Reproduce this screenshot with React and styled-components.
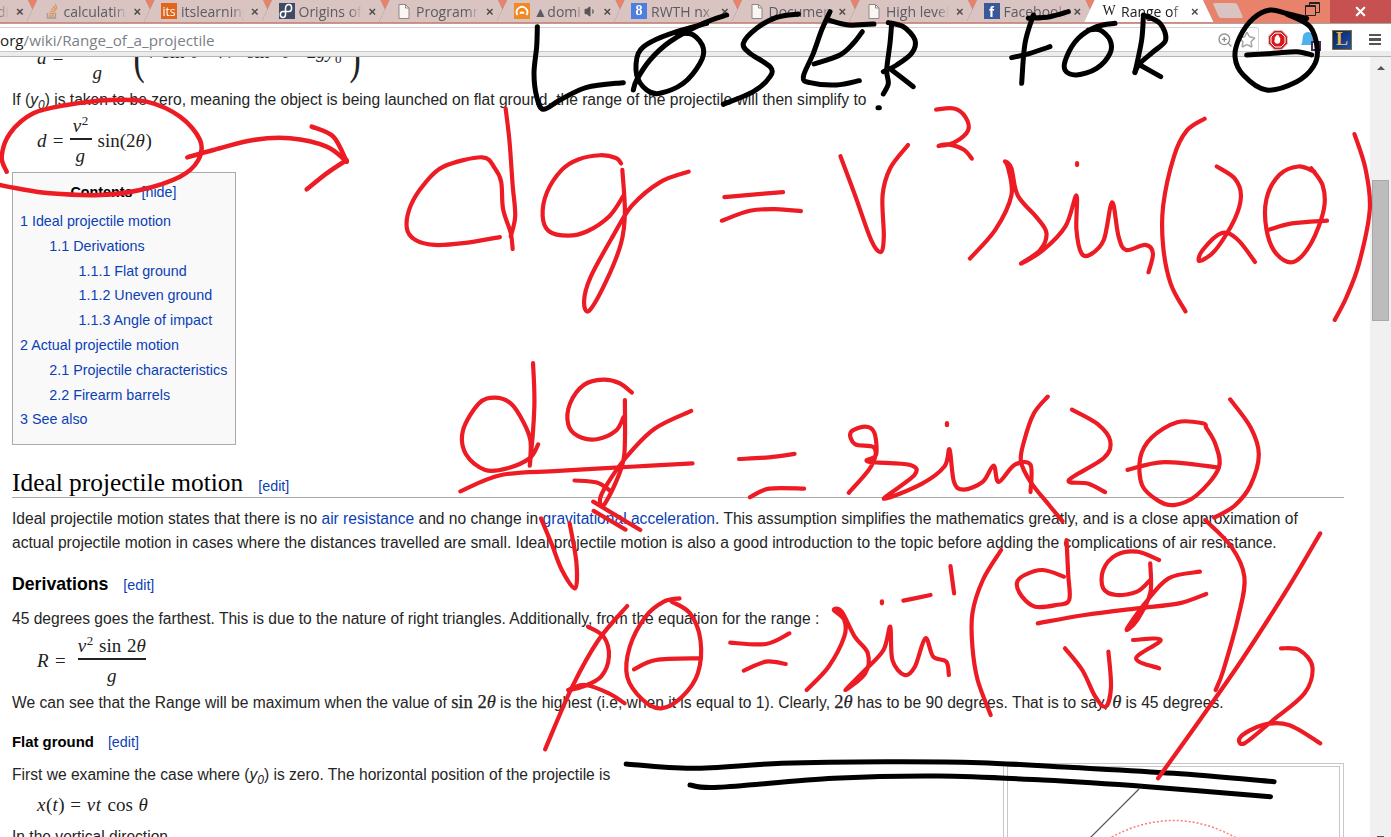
import React from "react";
import styled, { createGlobalStyle } from "styled-components";
import { X, ZoomIn, Star, Volume1 } from "lucide-react";

const GlobalStyle = createGlobalStyle`
  html, body {
    margin: 0;
    padding: 0;
    height: 100%;
    overflow: hidden;
    background: #fff;
  }
  * { box-sizing: border-box; }
`;

/* ---------- browser chrome ---------- */

const Page = styled.div`
  position: relative;
  width: 1391px;
  height: 837px;
  overflow: hidden;
  display: flex;
  flex-direction: column;
  font-family: "Liberation Sans", Arial, sans-serif;
`;

const TabStrip = styled.div`
  height: 23px;
  flex: none;
  display: flex;
  align-items: flex-start;
  background: #e9826b;
  overflow: hidden;
`;

const Tabs = styled.div`
  display: flex;
  margin-left: -91px;
  height: 22px;
`;

const TabShell = styled.div`
  width: 129.5px;
  height: 22px;
  flex: none;
  margin-right: -12px;
  position: relative;
  z-index: ${(p) => (p.$active ? 5 : 1)};
  filter: drop-shadow(0 0 0.6px #7d6a66);
`;

const TabBody = styled.div`
  height: 100%;
  display: flex;
  align-items: center;
  padding: 0 15px 0 17px;
  background: ${(p) => (p.$active ? "#fff" : "#d9c4c2")};
  clip-path: polygon(10.5px 0, calc(100% - 10.5px) 0, 100% 100%, 0 100%);
  color: ${(p) => (p.$active ? "#222" : "#5b5b63")};
`;

const TabLabel = styled.span`
  width: ${(p) => (p.$short ? "50px" : "63px")};
  margin-left: 4px;
  overflow: hidden;
  white-space: nowrap;
  text-align: ${(p) => (p.$end ? "right" : "left")};
  font: 14px "Open Sans", sans-serif;
  -webkit-mask-image: linear-gradient(to right, #000 80%, transparent);
  mask-image: linear-gradient(to right, #000 80%, transparent);
`;

const TabClose = styled.span`
  margin-left: auto;
  font: bold 13px "Liberation Sans", sans-serif;
  color: #4c4c4c;
  display: flex;
  align-items: center;
`;

const Favicon = styled.span`
  width: 16px;
  height: 16px;
  flex: none;
  display: flex;
  align-items: center;
  justify-content: center;
  overflow: hidden;
  background: ${(p) => p.$bg || "transparent"};
  color: ${(p) => p.$color || "#fff"};
  font: ${(p) => p.$font || "bold 10px 'Liberation Sans', sans-serif"};
`;

const NewTab = styled.div`
  width: 24px;
  height: 15px;
  margin: 3px 0 0 14px;
  flex: none;
  border-radius: 2px;
  background: #d9c4c2;
  transform: skewX(24deg);
`;

const WindowControls = styled.div`
  position: absolute;
  top: 0;
  right: 0;
  height: 23px;
  display: flex;
  align-items: flex-start;
`;

const RestoreIcon = styled.svg`
  margin-top: 1px;
`;

const CloseWindow = styled.div`
  width: 61px;
  height: 23px;
  margin-left: 10px;
  background: #c75050;
  display: flex;
  align-items: center;
  justify-content: center;
  color: #fff;
`;

const Toolbar = styled.div`
  height: 34px;
  flex: none;
  display: flex;
  align-items: flex-start;
  background: #fff;
  border-top: 1px solid #a9a3a3;
  border-bottom: 1px solid #b4b4b4;
  padding-top: 3px;
  position: relative;
`;

const Omnibox = styled.div`
  position: relative;
  z-index: 1;
  width: 1259px;
  height: 25px;
  flex: none;
  display: flex;
  align-items: center;
  justify-content: space-between;
  background: #fff;
  border-top: 1px solid #d5d5d5;
  border-right: 1px solid #d5d5d5;
  border-bottom: 1px solid #c9c9c9;
  border-top-right-radius: 3px;
  border-bottom-right-radius: 3px;
  padding-right: 2px;
  font: 15.2px "Open Sans", sans-serif;
  color: #7b7f86;
`;

const Host = styled.span`
  color: #222;
`;

const OmniIcons = styled.div`
  display: flex;
  align-items: center;
  gap: 5px;
  color: #8f8f8f;
`;

const ToolIcons = styled.div`
  position: relative;
  z-index: 1;
  flex: 1;
  display: flex;
  align-items: center;
  height: 25px;
  padding-left: 9px;
  gap: 11px;
`;

const Hamburger = styled.div`
  width: 12px;
  margin-left: 6px;
  display: flex;
  flex-direction: column;
  gap: 2px;
  span {
    height: 2.5px;
    background: #555;
  }
`;

const ToolBand = styled.div`
  position: absolute;
  left: 0;
  right: 0;
  bottom: 0;
  height: 5px;
  background: #ececec;
`;

const LolBadge = styled.div`
  width: 20px;
  height: 20px;
  flex: none;
  border: 1.5px solid #8a6c2c;
  background: linear-gradient(135deg, #0a1f55, #1a55b4);
  color: #e2b64c;
  font: bold 18px/17px "Liberation Serif", serif;
  text-align: center;
`;

/* ---------- wiki article ---------- */

const Viewport = styled.div`
  flex: 1;
  display: flex;
  min-height: 0;
`;

const Article = styled.main`
  width: 1370px;
  flex: none;
  overflow: hidden;
  padding: 0 26px 0 12px;
  font-size: 15.6px;
  line-height: 24px;
  color: #252525;
`;

const Para = styled.p`
  margin: ${(p) => p.$top || 0}px 0 0;
`;

const Link = styled.a`
  color: #0b3fb5;
`;

const EditLink = styled.span`
  font: 400 14.3px "Liberation Sans", sans-serif;
  color: #0b3fb5;
  margin-left: ${(p) => p.$gap || 15}px;
`;

const Var = styled.i`
  font-family: "Liberation Sans", sans-serif;
  font-style: italic;
  sub { font-size: 12px; line-height: 0; }
`;

const Formula = styled.div`
  display: flex;
  align-items: center;
  height: ${(p) => p.$h}px;
  margin: ${(p) => p.$top || 0}px 0 0 25px;
  gap: ${(p) => p.$gap || 6}px;
  font: 19px/1 "Liberation Serif", serif;
  color: #222;
  white-space: nowrap;
  word-spacing: 1px;
  i { letter-spacing: 0.6px; }
  sup { font-size: 13px; line-height: 0; }
  sub { font-size: 13px; line-height: 0; }
`;

const CutOff = styled.div`
  height: 31px;
  overflow: hidden;
`;

const Frac = styled.span`
  display: inline-flex;
  flex-direction: column;
  align-items: center;
  min-width: ${(p) => p.$w || 20}px;
`;

const Num = styled.span`
  height: 24px;
  display: flex;
  align-items: flex-end;
  padding-bottom: 3px;
  white-space: pre;
  align-self: stretch;
  justify-content: center;
  border-bottom: 2px solid #222;
`;

const Den = styled.span`
  height: 24px;
  padding-top: 6px;
`;

const BigParen = styled.span`
  font: 300 48px/60px "Liberation Serif", serif;
  transform: scaleX(0.7);
  width: 10px;
  display: inline-block;
  text-align: center;
`;

const RadicalRow = styled.span`
  width: 194px;
  padding-bottom: 12px;
  display: flex;
  justify-content: space-between;
`;

const InlineMath = styled.span`
  font: 18.500px "Liberation Serif", serif;
  -webkit-text-stroke: 0.25px #222;
`;

const Toc = styled.nav`
  width: 224px;
  height: 273px;
  margin-top: 7px;
  padding: 7px 0 0 7px;
  background: #f9f9f9;
  border: 1px solid #aaa;
  font-size: 14.3px;
`;

const TocTitle = styled.div`
  text-align: center;
  padding-right: 8px;
  font-weight: 700;
  color: #000;
  margin-bottom: 5px;
  span {
    font-weight: 400;
    color: #0b3fb5;
    margin-left: 9px;
  }
`;

const TocList = styled.ul`
  margin: 0;
  padding: 0;
  list-style: none;
`;

const TocItem = styled.li`
  line-height: 24.8px;
  color: #0b3fb5;
  white-space: nowrap;
  padding-left: ${(p) => p.$level * 29.3}px;
`;

const H2 = styled.h2`
  margin: 21px 0 9px;
  height: 32px;
  font: 400 25.4px/32px "Liberation Serif", serif;
  color: #000;
  border-bottom: 1px solid #aaa;
`;

const H3 = styled.h3`
  margin: 16px 0 10px;
  font: 700 17.7px/26px "Liberation Sans", sans-serif;
  color: #000;
`;

const H4 = styled.h4`
  margin: 15px 0 9px;
  font: 700 14.9px/24px "Liberation Sans", sans-serif;
  color: #000;
`;

const Thumb = styled.figure`
  float: right;
  width: 341px;
  height: 200px;
  margin: 0 0 0 20px;
  padding: 2px 3px;
  border: 1px solid #c8c8c8;
`;

const ThumbInner = styled.div`
  height: 100%;
  border: 1px solid #c8c8c8;
`;

const Scrollbar = styled.aside`
  flex: 1;
  display: flex;
  flex-direction: column;
  align-items: center;
  background: #f0f0f0;
`;

const ArrowUp = styled.div`
  margin-top: 9px;
  width: 0;
  height: 0;
  border-left: 4px solid transparent;
  border-right: 4px solid transparent;
  border-bottom: 4px solid #555;
`;

const ScrollThumb = styled.div`
  width: 17px;
  height: 141px;
  margin-top: 110px;
  background: #bcbcbc;
  border: 1px solid #a8a8a8;
`;

const ArrowDown = styled.div`
  margin-top: auto;
  width: 7px;
  height: 1px;
  background: #555;
`;

/* ---------- hand drawn marker layer ---------- */

const InkLayer = styled.svg`
  position: absolute;
  left: 0;
  top: 0;
  pointer-events: none;
  z-index: 10;
`;

// each group holds points read off a zoomed crop: origin + scale of that crop
const INK = [
  {
    color: "#000", width: 5, ox: 520, oy: 10, sx: 3, sy: 3,
    strokes: [
      [[52,50],[50,110],[42,190],[50,260],[70,298],[120,270],[200,232],[310,218]],
      [[620,15],[550,40],[450,95],[390,150],[350,210],[340,240]],
      [[470,70],[520,75],[550,115],[540,160],[490,220],[420,250],[380,240],[350,195],[355,130],[395,95],[470,65],[560,40]],
      [[835,12],[770,22],[710,55],[670,100],[690,130],[750,170],[750,200],[700,245],[610,283]],
      [[930,5],[905,60],[880,130],[850,200],[870,218],[950,225],[1018,212]],
      [[925,30],[985,45],[1062,42]],
      [[882,162],[960,135],[1000,100],[1027,65]],
      [[1115,40],[1110,100],[1100,180],[1105,220],[1090,252]],
      [[1105,38],[1150,50],[1185,90],[1175,130],[1130,165],[1090,185]],
      [[1115,180],[1180,230]],
      [[1074,293],[1078,293]],
    ],
  },
  {
    color: "#000", width: 5, ox: 1000, oy: 10, sx: 3, sy: 3,
    strokes: [
      [[100,15],[75,100],[65,220]],
      [[85,25],[150,20],[205,5]],
      [[35,143],[90,130],[150,110]],
      [[345,40],[290,50],[235,85],[200,140],[195,180],[230,195],[290,175],[330,130],[330,90],[300,60],[265,60]],
      [[430,20],[425,90],[405,188]],
      [[430,15],[480,40],[497,90],[460,125],[420,160],[405,185]],
      [[420,165],[482,200]],
    ],
  },
  {
    color: "#000", width: 5, ox: 1200, oy: 0, sx: 3, sy: 3,
    strokes: [
      [[320,55],[260,40],[210,30],[160,55],[120,110],[105,170],[130,225],[200,270],[290,245],[340,200],[352,150],[330,80],[260,42]],
      [[140,165],[220,160],[290,155],[335,165]],
    ],
  },
  {
    color: "#000", width: 5, ox: 520, oy: 480, sx: 1.912, sy: 3,
    strokes: [
      [[203,852],[330,865],[500,850],[700,845],[880,848],[1050,862],[1250,880],[1442,905]],
      [[325,915],[380,922],[600,895],[800,888],[1000,900],[1200,920],[1435,950]],
    ],
  },
  {
    color: "#ed1c24", width: 4.5, ox: 0, oy: 50, sx: 3, sy: 3,
    strokes: [
      [[20,365],[5,320],[30,250],[100,190],[200,165],[330,150],[440,155],[540,200],[600,270],[595,330],[540,380],[420,420],[300,435],[150,430],[50,415],[0,405]],
      [[562,322],[640,300],[760,270],[870,265],[980,290],[1040,335]],
      [[935,230],[1000,260],[1040,335]],
      [[920,418],[980,370],[1040,330]],
    ],
  },
  {
    color: "#ed1c24", width: 4.2, ox: 380, oy: 100, sx: 1.568, sy: 2.933,
    strokes: [
      // dg = v^2 sin(2 theta)
      [[188,402],[130,420],[85,425],[55,410],[42,375],[48,310],[70,245],[100,195],[160,168],[180,200],[190,240],[193,320],[205,390],[208,437]],
      [[197,25],[203,120],[208,250],[212,340],[205,400]],
      [[378,186],[370,170],[345,162],[310,175],[285,205],[262,270],[255,340],[265,385],[295,398],[325,385],[360,340],[382,280]],
      [[380,205],[384,330],[378,420],[355,530],[328,618],[320,590],[330,520],[365,400],[395,310],[440,240],[484,210]],
      [[540,285],[580,278],[632,270]],
      [[536,354],[580,325],[620,320],[660,326]],
      [[722,165],[745,280],[770,410],[785,446],[790,400],[788,280],[800,200],[828,132]],
      [[872,28],[900,25],[918,50],[922,90],[900,125],[876,135],[890,130],[915,145],[928,172]],
      [[925,465],[965,380],[990,280],[985,200],[980,180],[990,200],[1000,280],[1030,345],[1045,390],[1035,440],[1005,480],[1040,440],[1075,370],[1092,280],[1092,380],[1100,450],[1115,452],[1135,410],[1148,300],[1158,400],[1170,440],[1200,425],[1212,450],[1205,505]],
      [[1093,185],[1093,191]],
      [[1293,55],[1265,90],[1245,165],[1228,310],[1228,430],[1240,540],[1263,620]],
      [[1312,195],[1340,230],[1350,280],[1340,350],[1310,440],[1285,472],[1290,440],[1320,390],[1345,410],[1372,475]],
      [[1465,210],[1440,195],[1410,220],[1390,290],[1390,380],[1405,450],[1432,475],[1460,420],[1480,320],[1478,250],[1460,200]],
      [[1395,380],[1430,362],[1485,354]],
      [[1528,100],[1545,200],[1552,320],[1535,480],[1515,580],[1497,645]],
      // dg/v^2 = sin(2 theta)
      [[240,772],[242,900],[235,1070],[236,1000],[225,945],[205,890],[180,873],[155,890],[130,970],[135,1040],[165,1085],[200,1080],[235,1050],[248,1010]],
      [[395,858],[375,830],[350,820],[320,835],[298,890],[295,950],[310,985],[340,995],[370,970],[382,930]],
      [[384,880],[383,1040],[370,1120],[350,1190],[345,1170],[355,1130],[385,1050],[430,965],[488,912]],
      [[126,1148],[190,1100],[280,1088],[400,1075],[490,1066]],
      [[305,1116],[340,1122],[360,1145]],
      [[335,1205],[385,1260]],
      [[563,1053],[610,1048],[650,1038]],
      [[580,1165],[610,1140],[665,1140]],
      [[735,1152],[770,1075],[775,1020],[745,1010],[738,975],[760,958],[775,975],[778,1040],[765,1060],[830,1070],[838,1100],[790,1170],[850,1125],[885,1075],[893,1025],[900,1120],[915,1143],[945,1120],[962,1072],[970,1120],[995,1070],[1020,1070],[1020,1150]],
      [[889,948],[889,954]],
      [[1047,870],[1025,920],[1010,1000],[1005,1060],[1020,1120],[1050,1190],[1070,1235]],
      [[1085,908],[1125,950],[1145,1000],[1135,1050],[1080,1115],[1110,1125],[1137,1150]],
      [[1295,960],[1290,948],[1250,945],[1210,990],[1192,1050],[1195,1130],[1220,1175],[1245,1188],[1280,1160],[1315,1080],[1310,1010],[1295,960]],
      [[1172,1085],[1230,1062],[1315,1078]],
      [[1333,878],[1365,960],[1378,1040],[1365,1130],[1340,1190],[1308,1225]],
    ],
  },
  {
    color: "#ed1c24", width: 4.2, ox: 520, oy: 480, sx: 1.912, sy: 3,
    strokes: [
      [[140,65],[230,150]],
      [[40,115],[60,190],[80,270],[105,325],[108,250],[95,130]],
      [[205,378],[150,480],[100,620],[48,808]],
      [[130,440],[160,470],[170,530],[155,590],[120,620],[92,630],[125,615],[170,640],[200,670]],
      [[305,355],[275,365],[240,410],[210,500],[205,590],[235,660],[270,685],[310,650],[340,580],[345,480],[325,400],[290,365]],
      [[218,568],[260,540],[345,535]],
      [[402,488],[470,492],[515,460]],
      [[428,572],[470,545],[508,552]],
      [[548,630],[590,560],[620,470],[620,420],[600,390],[615,395],[640,470],[665,520],[660,580],[622,630],[660,570],[695,510],[708,440],[712,540],[735,585],[755,560],[775,475],[790,530],[815,545],[820,585]],
      [[692,364],[692,370]],
      [[733,362],[785,345]],
      [[823,258],[830,340]],
      [[920,210],[885,300],[865,400],[865,500],[875,600],[900,705]],
      [[1045,180],[1048,280],[1050,360],[1025,375],[985,380],[960,350],[950,310],[965,285],[1000,270],[1040,290]],
      [[1222,240],[1180,215],[1140,225],[1115,270],[1115,325],[1140,345],[1180,335],[1205,300]],
      [[1205,250],[1205,340],[1180,420],[1160,448],[1195,370],[1240,295],[1300,275]],
      [[990,430],[1080,405],[1180,385],[1260,370],[1312,342]],
      [[1042,505],[1075,570],[1100,650],[1120,680],[1130,620],[1125,515]],
      [[1172,480],[1225,480],[1178,535],[1222,565]],
      [[1310,120],[1360,200],[1385,290],[1375,400],[1345,570],[1330,630]],
      [[1530,160],[1470,320],[1380,540],[1300,720],[1220,895]],
      [[1455,505],[1490,510],[1515,560],[1500,640],[1440,720],[1385,790],[1378,770],[1420,735],[1470,735],[1530,790]],
    ],
  },
];

// catmull-rom through the points so the marker line hits every reading
const smooth = (pts) => {
  let d = `M${pts[0][0]} ${pts[0][1]}`;
  for (let i = 0; i < pts.length - 1; i++) {
    const p0 = pts[i - 1] || pts[i];
    const p1 = pts[i];
    const p2 = pts[i + 1];
    const p3 = pts[i + 2] || p2;
    const c1 = [p1[0] + (p2[0] - p0[0]) / 6, p1[1] + (p2[1] - p0[1]) / 6];
    const c2 = [p2[0] - (p3[0] - p1[0]) / 6, p2[1] - (p3[1] - p1[1]) / 6];
    d += ` C${c1[0]} ${c1[1]} ${c2[0]} ${c2[1]} ${p2[0]} ${p2[1]}`;
  }
  return d;
};

const Ink = () => (
  <InkLayer width="1391" height="837" viewBox="0 0 1391 837" fill="none" strokeLinecap="round" strokeLinejoin="round">
    {INK.map((g, i) =>
      g.strokes.map((s, j) => (
        <path
          key={`${i}-${j}`}
          d={smooth(s.map(([x, y]) => [g.ox + x / g.sx, g.oy + y / g.sy]))}
          stroke={g.color}
          strokeWidth={g.width}
        />
      ))
    )}
  </InkLayer>
);

/* ---------- small drawn icons ---------- */

const PageIcon = () => (
  <Favicon>
    <svg width="12" height="15" viewBox="0 0 12 15" fill="#fbf6f4" stroke="#8e8785">
      <path d="M1 .5h6.500l3.500 3.500v10.500H1z" />
      <path d="M7.500.5v3.500h3.500" fill="none" />
    </svg>
  </Favicon>
);

const StackIcon = () => (
  <Favicon>
    <svg width="14" height="16" viewBox="0 0 14 16" fill="none" stroke="#d9985a" strokeWidth="1.3">
      <path d="M2.500 10v5h8v-5" stroke="#a89c92" />
      <path d="M4 13h5M4.200 10.500l5 .5M5 8l4.800 1.500M6.300 5.500l4.200 2.700M8 3.300l3.400 3.700M10.300 1l1.600 4.800" />
    </svg>
  </Favicon>
);

const OriginsIcon = () => (
  <svg width="16" height="16" viewBox="0 0 16 16" fill="none" stroke="#fff" strokeWidth="1.500">
    <path d="M4 14.500c-3.500 0-3.500-6 0-6h6c3.500 0 3.500-7 0-7s-3.500 3-3.500 4.500v5.500c0 1.500-1 3-2.500 3z" />
  </svg>
);

const OrangeIcon = () => (
  <svg width="14" height="14" viewBox="0 0 14 14" fill="none" stroke="#fff" strokeWidth="1.800">
    <path d="M2.500 11a5.300 5.300 0 1 1 9 0" />
    <path d="M5 9.500a2.500 2.500 0 0 1 4 0" />
  </svg>
);

const StopIcon = () => (
  <svg width="20" height="20" viewBox="0 0 20 20">
    <path d="M6 0h8l6 6v8l-6 6H6l-6-6V6z" fill="#c8c8c8" />
    <path d="M6.400 1h7.200L19 6.400v7.200L13.600 19H6.400L1 13.600V6.400z" fill="#d9161c" />
    <path d="M7 3h6l4 4v6l-4 4H7l-4-4V7z" fill="none" stroke="#fff" strokeWidth="1" />
    <path d="M6.800 9V7.200c0-.8 1.100-.8 1.100 0V5.800c0-.8 1.100-.8 1.100 0v-.5c0-.8 1.100-.8 1.100 0v.6c0-.8 1.100-.8 1.100 0v1.900c0-.7 1-.7 1 0v3c0 2-1.200 3-2.800 3-1.900 0-2.600-1-3.100-2.800z" fill="#fff" />
  </svg>
);

const BellIcon = () => (
  <svg width="22" height="22" viewBox="0 0 22 22">
    <path d="M2 16c2-2 1-7 2.500-10.500C6 2 12 2 13.500 5.500 15 9 14 14 16 16z" fill="#4db2ea" />
    <rect x="13" y="13" width="8" height="8" fill="#fff" stroke="#4b2a5e" strokeWidth="2" />
  </svg>
);

const TABS = [
  { label: "di", end: true },
  { label: "calculating", icon: <StackIcon /> },
  { label: "itslearning", icon: <Favicon $bg="#e2651c" $font="400 12px 'Open Sans', sans-serif">its</Favicon> },
  { label: "Origins of", icon: <Favicon $bg="#3f4a66"><OriginsIcon /></Favicon> },
  { label: "Programming", icon: <PageIcon /> },
  { label: "▲domi", short: true, speaker: true, icon: <Favicon $bg="#f28a24"><OrangeIcon /></Favicon> },
  { label: "RWTH nx", icon: <Favicon $bg="#4d7fe0" $font="bold 14px 'Liberation Serif', serif">8</Favicon> },
  { label: "Document", icon: <PageIcon /> },
  { label: "High level", icon: <PageIcon /> },
  { label: "Facebook", icon: <Favicon $bg="#3b5998" $font="bold 15px 'Liberation Sans', sans-serif">f</Favicon> },
  { label: "Range of", active: true, icon: <Favicon $color="#222" $font="400 14px 'Liberation Serif', serif">W</Favicon> },
];

const TOC = [
  { n: "1 Ideal projectile motion", level: 0 },
  { n: "1.1 Derivations", level: 1 },
  { n: "1.1.1 Flat ground", level: 2 },
  { n: "1.1.2 Uneven ground", level: 2 },
  { n: "1.1.3 Angle of impact", level: 2 },
  { n: "2 Actual projectile motion", level: 0 },
  { n: "2.1 Projectile characteristics", level: 1 },
  { n: "2.2 Firearm barrels", level: 1 },
  { n: "3 See also", level: 0 },
];

const App = () => (
  <Page>
    <GlobalStyle />
    <TabStrip>
      <Tabs>
        {TABS.map((t) => (
          <TabShell key={t.label} $active={t.active}>
            <TabBody $active={t.active}>
              {t.icon || <Favicon />}
              <TabLabel $short={t.short} $end={t.end}>{t.label}</TabLabel>
              {t.speaker && <Volume1 size={13} color="#555" fill="#555" />}
              <TabClose>×</TabClose>
            </TabBody>
          </TabShell>
        ))}
      </Tabs>
      <NewTab />
    </TabStrip>
    <WindowControls>
      <RestoreIcon width="15" height="15" viewBox="0 0 15 15" fill="none" stroke="#222" strokeWidth="1">
        <path d="M.5 4.500h10v10H.5z" />
        <path d="M4.500 4.500v-3h10v10h-4" />
        <path d="M4.500 2.500h10M.5 5.500h10" />
      </RestoreIcon>
      <CloseWindow><X size={15} strokeWidth={3.4} /></CloseWindow>
    </WindowControls>

    <Toolbar>
      <ToolBand />
      <Omnibox>
        <span><Host>org</Host>/wiki/Range_of_a_projectile</span>
        <OmniIcons>
          <ZoomIn size={16} />
          <Star size={18} color="#a5a5a5" />
        </OmniIcons>
      </Omnibox>
      <ToolIcons>
        <StopIcon />
        <BellIcon />
        <LolBadge>L</LolBadge>
        <Hamburger><span /><span /><span /></Hamburger>
      </ToolIcons>
    </Toolbar>

    <Viewport>
      <Article>
        <CutOff>
          <Formula $h={60} $top={-30}>
            <span><i>d</i> =</span>
            <Frac $w={56}><Num> </Num><Den><i>g</i></Den></Frac>
            <BigParen>(</BigParen>
            <RadicalRow>
              <span><i>v</i> sin <i>θ</i></span>
              <span>+</span>
              <span>√<i>v</i><sup>2</sup> sin<sup>2</sup> <i>θ</i></span>
              <span>+</span>
              <span>2<i>gy</i><sub>0</sub></span>
            </RadicalRow>
            <BigParen>)</BigParen>
          </Formula>
        </CutOff>

        <Para>If (<Var>y<sub>0</sub></Var>) is taken to be zero, meaning the object is being launched on flat ground, the range of the projectile will then simplify to</Para>

        <Formula $h={50} $top={3}>
          <span><i>d</i> =</span>
          <Frac $w={22}><Num><span><i>v</i><sup>2</sup></span></Num><Den><i>g</i></Den></Frac>
          <span>sin(2<i>θ</i>)</span>
        </Formula>

        <Toc>
          <TocTitle>Contents<span>[hide]</span></TocTitle>
          <TocList>
            {TOC.map((item) => (
              <TocItem key={item.n} $level={item.level}>{item.n}</TocItem>
            ))}
          </TocList>
        </Toc>

        <H2>Ideal projectile motion<EditLink>[edit]</EditLink></H2>
        <Para>
          Ideal projectile motion states that there is no <Link>air resistance</Link> and no change in <Link>gravitational acceleration</Link>. This assumption simplifies the mathematics greatly, and is a close approximation of<br />
          actual projectile motion in cases where the distances travelled are small. Ideal projectile motion is also a good introduction to the topic before adding the complications of air resistance.
        </Para>

        <H3>Derivations<EditLink>[edit]</EditLink></H3>
        <Para>45 degrees goes the farthest. This is due to the nature of right triangles. Additionally, from the equation for the range :</Para>

        <Formula $h={50} $top={4} $gap={12}>
          <span><i>R</i> =</span>
          <Frac $w={67}><Num><span><i>v</i><sup>2</sup> sin 2<i>θ</i></span></Num><Den><i>g</i></Den></Frac>
        </Formula>

        <Para $top={6}>
          We can see that the Range will be maximum when the value of <InlineMath>sin 2<i>θ</i></InlineMath> is the highest (i.e, when it is equal to 1). Clearly, <InlineMath>2<i>θ</i></InlineMath> has to be 90 degrees. That is to say, <InlineMath><i>θ</i></InlineMath> is 45 degrees.
        </Para>

        <H4>Flat ground<EditLink $gap={14}>[edit]</EditLink></H4>
        <Thumb>
          <ThumbInner>
            <svg width="333" height="194" viewBox="0 0 333 194" fill="none">
              <path d="M81 72 L131 22" stroke="#555" strokeWidth="1.2" />
              <path d="M100 72 Q166 35 230 72" stroke="#f77" strokeWidth="1.5" strokeDasharray="2 2" />
            </svg>
          </ThumbInner>
        </Thumb>
        <Para>First we examine the case where (<Var>y<sub>0</sub></Var>) is zero. The horizontal position of the projectile is</Para>

        <Formula $h={30} $top={2}>
          <span><i>x</i>(<i>t</i>) = <i>vt</i> cos <i>θ</i></span>
        </Formula>

        <Para $top={6}>In the vertical direction</Para>
      </Article>
      <Scrollbar>
        <ArrowUp />
        <ScrollThumb />
        <ArrowDown />
      </Scrollbar>
    </Viewport>

    <Ink />
  </Page>
);

export default App;
